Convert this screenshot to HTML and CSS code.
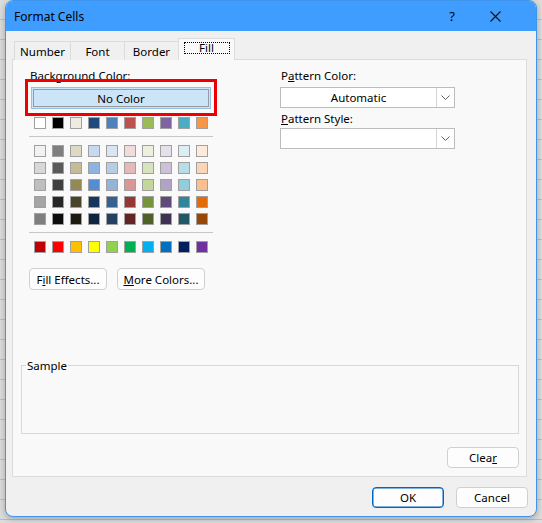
FILE: index.html
```html
<!DOCTYPE html>
<html>
<head>
<meta charset="utf-8">
<link rel="stylesheet" href="styles.css">
</head>
<body>
<div class="dialog">
  <div class="titlebar">
    <span class="title">Format Cells</span>
    <span class="help">?</span>
    <span class="close"><svg width="11" height="11" viewBox="0 0 11 11"><path d="M0.5 0.5 L10.5 10.5 M10.5 0.5 L0.5 10.5" stroke="#111" stroke-width="1.1" fill="none"/></svg></span>
  </div>
  <div class="body">
    <div class="tabs">
      <div class="tab w57">Number</div>
      <div class="tab w55">Font</div>
      <div class="tab w55">Border</div>
      <div class="tab w57 active"><span class="focus">Fill</span></div>
    </div>
    <div class="panel">
      <div class="cols">
        <div class="left">
          <div class="label">Background <u>C</u>olor:</div>
          <button class="nocolor">No Color</button>
          <div class="swrow first">
            <i style="background:#ffffff"></i><i style="background:#000000"></i><i style="background:#eeece1"></i><i style="background:#1f497d"></i><i style="background:#4f81bd"></i><i style="background:#c0504d"></i><i style="background:#9bbb59"></i><i style="background:#8064a2"></i><i style="background:#4bacc6"></i><i style="background:#f79646"></i>
          </div>
          <div class="sep"></div>
          <div class="grid">
            <i style="background:#f2f2f2"></i><i style="background:#7f7f7f"></i><i style="background:#ddd9c3"></i><i style="background:#c6d9f0"></i><i style="background:#dbe5f1"></i><i style="background:#f2dcdb"></i><i style="background:#ebf1dd"></i><i style="background:#e5e0ec"></i><i style="background:#dbeef3"></i><i style="background:#fdeada"></i>
            <i style="background:#d8d8d8"></i><i style="background:#595959"></i><i style="background:#c4bd97"></i><i style="background:#8db3e2"></i><i style="background:#b8cce4"></i><i style="background:#e5b9b7"></i><i style="background:#d7e3bc"></i><i style="background:#ccc1d9"></i><i style="background:#b7dde8"></i><i style="background:#fbd5b5"></i>
            <i style="background:#bfbfbf"></i><i style="background:#3f3f3f"></i><i style="background:#938953"></i><i style="background:#548dd4"></i><i style="background:#95b3d7"></i><i style="background:#d99694"></i><i style="background:#c3d69b"></i><i style="background:#b2a2c7"></i><i style="background:#92cddc"></i><i style="background:#fac08f"></i>
            <i style="background:#a5a5a5"></i><i style="background:#262626"></i><i style="background:#494429"></i><i style="background:#17365d"></i><i style="background:#366092"></i><i style="background:#953734"></i><i style="background:#76923c"></i><i style="background:#5f497a"></i><i style="background:#31859b"></i><i style="background:#e36c09"></i>
            <i style="background:#7f7f7f"></i><i style="background:#0c0c0c"></i><i style="background:#1d1b10"></i><i style="background:#0f243e"></i><i style="background:#244061"></i><i style="background:#632423"></i><i style="background:#4f6128"></i><i style="background:#3f3151"></i><i style="background:#205867"></i><i style="background:#974806"></i>
          </div>
          <div class="sep"></div>
          <div class="swrow std">
            <i style="background:#c00000"></i><i style="background:#ff0000"></i><i style="background:#ffc000"></i><i style="background:#ffff00"></i><i style="background:#92d050"></i><i style="background:#00b050"></i><i style="background:#00b0f0"></i><i style="background:#0070c0"></i><i style="background:#002060"></i><i style="background:#7030a0"></i>
          </div>
          <div class="btnrow">
            <button class="btn fill">F<u>i</u>ll Effects...</button>
            <button class="btn more"><u>M</u>ore Colors...</button>
          </div>
        </div>
        <div class="right">
          <div class="label">P<u>a</u>ttern Color:</div>
          <div class="combo"><span class="val">Automatic</span><span class="drop"><svg width="9" height="5" viewBox="0 0 9 5"><path d="M0.5 0.5 L4.5 4.5 L8.5 0.5" stroke="#606060" fill="none" stroke-width="1"/></svg></span></div>
          <div class="label second"><u>P</u>attern Style:</div>
          <div class="combo"><span class="val"></span><span class="drop"><svg width="9" height="5" viewBox="0 0 9 5"><path d="M0.5 0.5 L4.5 4.5 L8.5 0.5" stroke="#606060" fill="none" stroke-width="1"/></svg></span></div>
        </div>
      </div>
      <fieldset class="sample"><legend>Sample</legend></fieldset>
      <div class="clearrow"><button class="btn clear">Clea<u>r</u></button></div>
    </div>
    <div class="footer">
      <button class="btn ok">OK</button>
      <button class="btn cancel">Cancel</button>
    </div>
  </div>
  <div class="highlight"></div>
</div>
</body>
</html>
```
FILE: styles.css
```css
* { box-sizing: border-box; }
html, body { margin: 0; padding: 0; }
body {
  width: 542px;
  height: 523px;
  overflow: hidden;
  font-family: "Segoe UI", "Noto Sans", "Open Sans", sans-serif;
  font-size: 11.5px;
  color: #000;
  background-color: #dcdcdc;
  background-image: repeating-linear-gradient(to bottom, transparent 0, transparent 19px, #bcbcbc 19px, #bcbcbc 20px);
}
.dialog {
  position: relative;
  margin-left: 5px;
  width: 532px;
  height: 517px;
  background: #f0f0f0;
  border: 1px solid #3f94ec;
  border-radius: 8px;
  overflow: hidden;
  box-shadow: 0 2px 6px rgba(0,0,0,0.25);
}
.titlebar {
  height: 30px;
  background: #3f9dff;
  display: flex;
  align-items: center;
  padding-left: 8px;
  font-size: 12px;
}
.title { flex: 1; }
.help { width: 20px; text-align: center; margin-right: 18px; font-size: 13px; }
.close { width: 30px; display: flex; justify-content: center; margin-right: 26px; }
.body {
  padding: 7px 8px 0 6px;
}
.tabs {
  display: flex;
  align-items: flex-end;
  margin-left: 2px;
  height: 22px;
  margin-bottom: -1px;
}
.tab {
  height: 19px;
  border: 1px solid #dcdcdc;
  border-bottom: none;
  background: #f0f0f0;
  display: flex;
  align-items: center;
  justify-content: center;
  margin-right: -1px;
  line-height: 14px;
  padding-top: 1px;
}
.w57 { width: 57px; }
.w55 { width: 55px; }
.tab.active {
  height: 22px;
  background: #f9f9f9;
  position: relative;
  z-index: 1;
  align-items: flex-start;
  padding-top: 3px;
}
.focus {
  display: block;
  width: 46px;
  height: 12px;
  border: 1px dotted #000;
  text-align: center;
  line-height: 10px;
}
.panel {
  width: 515px;
  height: 418px;
  background: #f9f9f9;
  border: 1px solid #dcdcdc;
  padding: 8px 0 0 0;
}
.cols { display: flex; }
.left { margin-left: 16px; width: 184px; }
.right { margin-left: 67px; width: 175px; }
.label { height: 15px; line-height: 15px; padding-left: 1px; margin-bottom: 4px; }
.label.second { margin-top: 3px; margin-bottom: 2px; }
.nocolor {
  display: block;
  margin-left: 2px;
  width: 180px;
  height: 22px;
  padding: 0;
  font: inherit;
  color: #000;
  background: #cce4f7;
  border: 1px solid #8ec1ec;
  box-shadow: inset 0 0 0 1px #cce4f7, inset 0 0 0 2px #9a9a9a;
}
.swrow, .grid {
  display: grid;
  grid-template-columns: repeat(10, 12px);
  column-gap: 6px;
  margin-left: 5px;
}
.grid { row-gap: 5px; margin-top: 8px; }
.swrow.first { margin-top: 8px; }
.swrow.std { margin-top: 8px; }
.swrow i, .grid i {
  display: block;
  width: 12px;
  height: 12px;
  border: 1px solid #a0a0a0;
}
.sep { height: 1px; background: #c6c6c6; margin-top: 7px; }
.grid + .sep { margin-top: 7px; }
.btnrow { display: flex; gap: 10px; margin-top: 15px; }
.btn {
  height: 22px;
  padding: 0;
  font: inherit;
  color: #000;
  background: #fdfdfd;
  border: 1px solid #d0d0d0;
  border-radius: 4px;
}
.btn.fill { width: 78px; }
.btn.more { width: 88px; }
.combo {
  display: flex;
  height: 21px;
  background: #fff;
  border: 1px solid #bcbcbc;
}
.combo .val { flex: 1; text-align: center; line-height: 19px; }
.combo .drop {
  width: 18px;
  border-left: 1px solid #d4d4d4;
  display: flex;
  align-items: center;
  justify-content: center;
}
.sample {
  margin: 68px 7px 0 8px;
  padding: 0;
  height: 76px;
  border: 1px solid #d8d8d8;
}
.sample legend {
  margin-left: 4px;
  padding: 0 1px;
  line-height: 15px;
}
.clearrow { display: flex; justify-content: flex-end; margin: 13px 7px 0 0; }
.btn.clear { width: 72px; height: 21px; }
.footer { display: flex; justify-content: flex-end; gap: 12px; margin-top: 10px; }
.btn.ok, .btn.cancel { width: 72px; height: 21px; }
.btn.ok { border: 1px solid #0067c0; box-shadow: inset 0 0 0 0.5px #0067c0; }
.highlight {
  position: absolute;
  left: 19px;
  top: 78px;
  width: 192px;
  height: 37px;
  border: 3px solid #ee0000;
}
```
